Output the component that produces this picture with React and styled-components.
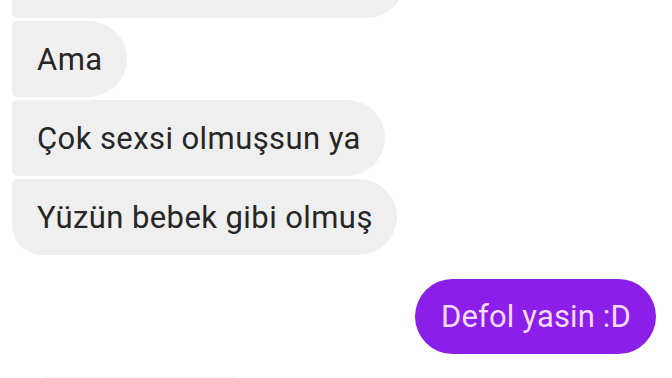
import React from 'react';
import styled, { createGlobalStyle } from 'styled-components';

const GlobalStyle = createGlobalStyle`
  html, body {
    margin: 0;
    padding: 0;
    background: #ffffff;
    overflow: hidden;
  }
  body {
    font-family: Roboto, "Noto Sans", "Liberation Sans", sans-serif;
  }
`;

const Thread = styled.div`
  width: 672px;
  height: 378px;
  box-sizing: border-box;
  padding: 0 16px 0 12px;
  display: flex;
  flex-direction: column;
  overflow: hidden;
`;

const Group = styled.div`
  display: flex;
  flex-direction: column;
  align-items: ${p => (p.mine ? 'flex-end' : 'flex-start')};
  gap: 3px;
  margin-top: ${p => p.offset || 0}px;
`;

const Bubble = styled.div`
  box-sizing: border-box;
  height: 76px;
  padding: 0 24px 0 25px;
  display: flex;
  align-items: center;
  font-size: 31px;
  letter-spacing: 0.42px;
  white-space: nowrap;
  background: #efefef;
  color: #262626;
  border-radius: ${p => p.corners || '5px 38px 38px 5px'};
`;

const MineBubble = styled(Bubble)`
  height: 75px;
  padding: 0 25px 0 26px;
  letter-spacing: 0.15px;
  background: #8b1ee8;
  color: #f6dcff;
  border-radius: 38px;
`;

const Trail = styled.div`
  margin: 23px 0 0 33px;
  width: 190px;
  height: 2px;
  border-radius: 2px;
  background: #f5f5f5;
`;

export default function App() {
  return (
    <>
      <GlobalStyle />
      <Thread>
        <Group offset={-58}>
          <Bubble style={{ width: 393 }} corners="5px 38px 38px 5px" />
          <Bubble>Ama</Bubble>
          <Bubble>Çok sexsi olmuşsun ya</Bubble>
          <Bubble corners="5px 38px 38px 30px">Yüzün bebek gibi olmuş</Bubble>
        </Group>
        <Group mine offset={24}>
          <MineBubble>Defol yasin :D</MineBubble>
        </Group>
        <Trail />
      </Thread>
    </>
  );
}
